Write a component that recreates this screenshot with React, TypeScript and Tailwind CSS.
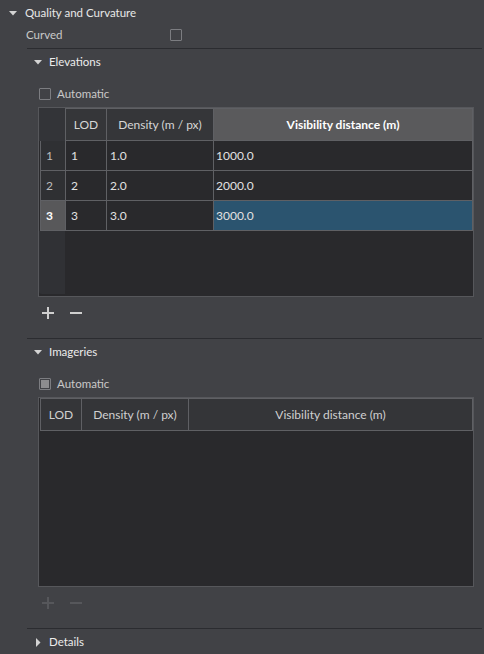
import React from "react";

const FONT = { fontFamily: 'Lato, "Noto Sans", sans-serif' };

function TriDown() {
  return (
    <svg width="8" height="5" viewBox="0 0 8 5" className="shrink-0">
      <path d="M0 0H8L4 4.5Z" fill="#d4d4d4" />
    </svg>
  );
}
function TriRight() {
  return (
    <svg width="5" height="9" viewBox="0 0 5 9" className="shrink-0">
      <path d="M0 0L4.5 4.5L0 9Z" fill="#d4d4d4" />
    </svg>
  );
}

function Check({ partial = false }: { partial?: boolean }) {
  return (
    <div className="w-[12px] h-[12px] border border-[#7c7d81] rounded-[1px] flex items-center justify-center shrink-0">
      {partial && <div className="w-[8px] h-[8px] bg-[#8c8c8e]" />}
    </div>
  );
}

function PlusMinus({ disabled = false }: { disabled?: boolean }) {
  const c = disabled ? "#56575b" : "#cfcfcf";
  return (
    <div className="h-[32px] flex items-center pl-[14px] gap-[14px]">
      <svg width="14" height="14" viewBox="0 0 14 14">
        <path d="M7 1V13M1 7H13" stroke={c} strokeWidth="2" />
      </svg>
      <svg width="14" height="14" viewBox="0 0 14 14">
        <path d="M1 7H13" stroke={c} strokeWidth="2" />
      </svg>
    </div>
  );
}

function Sep() {
  return <div className="h-px bg-[#2b2c30] mt-[9px]" />;
}

function SectionHeader({ label, open = true }: { label: string; open?: boolean }) {
  return (
    <div className="h-[26px] flex items-center pl-[7px]">
      <div className="w-[8px] flex items-center justify-center">{open ? <TriDown /> : <TriRight />}</div>
      <span className="ml-[7px] text-[11.5px] text-[#ececec]">{label}</span>
    </div>
  );
}

function AutoRow({ partial = false }: { partial?: boolean }) {
  return (
    <div className="h-[20px] mt-[9px] flex items-center pl-[12px]">
      <Check partial={partial} />
      <span className="ml-[6px] text-[11.5px] text-[#c9c9c9]">Automatic</span>
    </div>
  );
}

const rows = [
  { n: "1", lod: "1", d: "1.0", v: "1000.0" },
  { n: "2", lod: "2", d: "2.0", v: "2000.0" },
  { n: "3", lod: "3", d: "3.0", v: "3000.0" },
];

function ElevTable() {
  return (
    <div className="ml-[11px] mt-[3px] w-[436px] h-[190px] border border-[#56575b] bg-[#29292c] flex flex-col">
      <div className="h-[33px] flex shrink-0">
        <div className="w-[26px] bg-[#333438]" />
        <div className="w-[42px] border border-[#5f6064] bg-[#353639] flex items-center justify-center text-[#d6d6d6]">LOD</div>
        <div className="w-[107px] border-y border-r border-[#5f6064] bg-[#353639] flex items-center justify-center text-[#d6d6d6]">Density (m / px)</div>
        <div className="w-[259px] border-y border-r border-[#5f6064] bg-[#5a5a5c] flex items-center justify-center text-white font-bold">Visibility distance (m)</div>
      </div>
      {rows.map((r, i) => {
        const sel = i === 2;
        return (
          <div key={r.n} className="h-[30px] flex shrink-0">
            <div
              className={`w-[26px] ml-px border-x border-b border-[#5f6064] flex items-center pl-[5px] ${sel ? "bg-[#58585a] text-white font-bold" : "bg-[#2f3033] text-[#bdbdbd]"}`}
            >
              {r.n}
            </div>
            <div className="w-[41px] border-b border-r border-[#5f6064] flex items-center pl-[5px] text-[#e2e2e2]">{r.lod}</div>
            <div className="w-[107px] border-b border-r border-[#5f6064] flex items-center pl-[3px] text-[#e2e2e2]">{r.d}</div>
            <div className={`w-[259px] border-b border-r border-[#5f6064] flex items-center pl-[2px] text-[#e2e2e2] ${sel ? "bg-[#2b546f]" : ""}`}>{r.v}</div>
          </div>
        );
      })}
      <div className="flex-1 flex">
        <div className="w-[26px] bg-[#303135] rounded-bl-[3px] mb-[2px]" />
      </div>
    </div>
  );
}

function ImgTable() {
  return (
    <div className="ml-[11px] mt-[3px] w-[436px] h-[190px] border border-[#56575b] bg-[#29292c] flex flex-col">
      <div className="h-[33px] flex shrink-0 pl-px">
        <div className="w-[42px] border border-[#5f6064] bg-[#343538] flex items-center justify-center text-[#d0d0d0]">LOD</div>
        <div className="w-[107px] border-y border-r border-[#5f6064] bg-[#343538] flex items-center justify-center text-[#d0d0d0]">Density (m / px)</div>
        <div className="w-[284px] border-y border-r border-[#5f6064] bg-[#343538] flex items-center justify-center text-[#d0d0d0]">Visibility distance (m)</div>
      </div>
    </div>
  );
}

export default function App() {
  return (
    <div className="w-[484px] h-[654px] bg-[#414246] text-[12px] leading-none overflow-hidden" style={FONT}>
      <div className="h-[26px] flex items-center pl-[9px]">
        <TriDown />
        <span className="ml-[8px] text-[11.5px] text-[#e8e8e8]">Quality and Curvature</span>
      </div>
      <div className="h-[18px] flex items-center pl-[26px]">
        <span className="w-[144px] text-[11.5px] text-[#c9c9c9]">Curved</span>
        <Check />
      </div>
      <div className="ml-[27px] w-[455px]">
        <div className="h-px bg-[#2b2c30] mt-[4px]" />
        <SectionHeader label="Elevations" />
        <AutoRow />
        <ElevTable />
        <PlusMinus />
        <Sep />
        <SectionHeader label="Imageries" />
        <AutoRow partial />
        <ImgTable />
        <PlusMinus disabled />
        <Sep />
        <SectionHeader label="Details" open={false} />
      </div>
    </div>
  );
}
